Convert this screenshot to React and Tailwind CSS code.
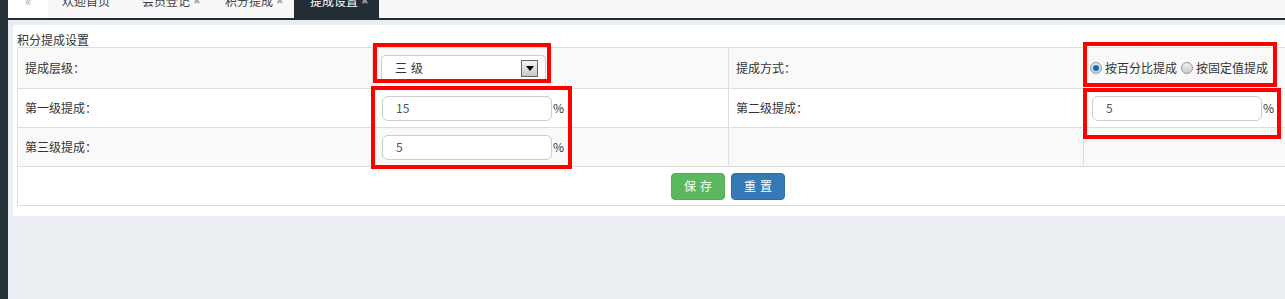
import React from 'react';

const font = { fontFamily: '"Noto Sans CJK SC", "Liberation Sans", sans-serif' };

const Tab = ({ label, close, active }) => (
    <div
        className={`h-[18px] flex items-start ${close ? 'pl-[14px] pr-[10px]' : 'pl-[14px] pr-[18px]'} ${active ? 'bg-[#232d33] text-white pl-[16px]' : 'text-[#444]'}`}
    >
        <span className="-mt-[6px] text-[12px] leading-[13px] whitespace-nowrap">{label}</span>
        {close && (
            <span className={`-mt-[6px] ml-[3px] text-[9px] leading-[13px] ${active ? 'text-[#999]' : 'text-[#aaa]'}`}>✖</span>
        )}
    </div>
);

const PercentInput = ({ value }) => (
    <div className="flex items-center">
        <div className="w-[170px] h-[25px] rounded-[6px] border border-[#ccc] bg-white flex items-center pl-[13px] text-[12px] text-[#555]">
            {value}
        </div>
        <span className="text-[12px] text-[#333] ml-[1px]">%</span>
    </div>
);

const Radio = ({ checked }) => (
    <span className="inline-flex w-[12px] h-[12px] rounded-full border border-[#999] bg-gradient-to-b from-[#eee] to-[#ccc] items-center justify-center">
        {checked && <span className="w-[6px] h-[6px] rounded-full bg-[#0a6fc2]" />}
    </span>
);

export default function App() {
    const modes = [
        { label: '按百分比提成', checked: true },
        { label: '按固定值提成', checked: false }
    ];

    return (
        <div className="relative h-[299px] w-[1285px] overflow-hidden flex bg-[#eaedf1]" style={font}>
            {/* left strip */}
            <div className="w-[8px] shrink-0 bg-[#263238]" />

            <div className="flex-1 flex flex-col min-w-0">
                {/* tab bar */}
                <div className="h-[18px] flex bg-[#f7f7f7] shrink-0">
                    <div className="w-[40px] h-[18px] bg-white flex justify-center">
                        <span className="-mt-[6px] text-[13px] leading-[13px] text-[#aaa]">«</span>
                    </div>
                    <div className="flex">
                        <Tab label="欢迎首页" />
                        <Tab label="会员登记" close />
                        <Tab label="积分提成" close />
                        <Tab label="提成设置" close active />
                    </div>
                </div>
                <div className="h-[2px] bg-[#232d33] shrink-0" />

                {/* panel */}
                <div className="mt-[5px] ml-[5px] w-[1440px] bg-white pb-[10px] pl-[4px]">
                    <div className="h-[22px] pt-[8px] text-[12px] leading-[14px] text-[#333]">积分提成设置</div>
                    <table className="w-[1421px] border-collapse table-fixed text-[12px] text-[#333]">
                        <tbody>
                            <tr className="h-[41px] bg-[#f9f9f9]">
                                <td className="border border-[#ddd] pl-[7px] w-[355px]">提成层级：</td>
                                <td className="border border-[#ddd] pl-[8px] w-[356px]">
                                    <div className="w-[165px] h-[27px] rounded-[4px] border border-[#ccc] bg-white flex items-center justify-between pl-[13px] pr-[7px]">
                                        <span className="tracking-[4px]">三级</span>
                                        <span className="w-[17px] h-[17px] border border-[#666] bg-gradient-to-b from-[#f4f4f4] to-[#c8c8c8] flex items-center justify-center">
                                            <svg width="8" height="5" viewBox="0 0 8 5">
                                                <path d="M0 0 H8 L4 5 Z" fill="#000" />
                                            </svg>
                                        </span>
                                    </div>
                                </td>
                                <td className="border border-[#ddd] pl-[7px] w-[355px]">提成方式：</td>
                                <td className="border border-[#ddd] pl-[6px] w-[355px]">
                                    <div className="flex items-center">
                                        {modes.map((m) => (
                                            <label key={m.label} className="flex items-center mr-[4px]">
                                                <Radio checked={m.checked} />
                                                <span className="ml-[3px]">{m.label}</span>
                                            </label>
                                        ))}
                                    </div>
                                </td>
                            </tr>
                            <tr className="h-[39px] bg-white">
                                <td className="border border-[#ddd] pl-[7px]">第一级提成：</td>
                                <td className="border border-[#ddd] pl-[9px]">
                                    <PercentInput value="15" />
                                </td>
                                <td className="border border-[#ddd] pl-[7px]">第二级提成：</td>
                                <td className="border border-[#ddd] pl-[8px]">
                                    <PercentInput value="5" />
                                </td>
                            </tr>
                            <tr className="h-[39px] bg-[#f9f9f9]">
                                <td className="border border-[#ddd] pl-[7px]">第三级提成：</td>
                                <td className="border border-[#ddd] pl-[9px]">
                                    <PercentInput value="5" />
                                </td>
                                <td className="border border-[#ddd]" />
                                <td className="border border-[#ddd]" />
                            </tr>
                            <tr className="h-[39px] bg-white">
                                <td colSpan={4} className="border border-[#ddd]">
                                    <div className="flex justify-center gap-[6px]">
                                        <button className="w-[54px] h-[27px] rounded-[4px] bg-[#5cb85c] border border-[#4cae4c] text-white text-[12px] tracking-[4px] pl-[4px]">
                                            保存
                                        </button>
                                        <button className="w-[54px] h-[27px] rounded-[4px] bg-[#337ab7] border border-[#2e6da4] text-white text-[12px] tracking-[4px] pl-[4px]">
                                            重置
                                        </button>
                                    </div>
                                </td>
                            </tr>
                        </tbody>
                    </table>
                </div>
            </div>

            {/* red annotation boxes */}
            <div className="absolute left-[373px] top-[43px] w-[178px] h-[40px] border-4 border-[#ff0000]" />
            <div className="absolute left-[371px] top-[86px] w-[201px] h-[83px] border-4 border-[#ff0000]" />
            <div className="absolute left-[1083px] top-[42px] w-[194px] h-[45px] border-4 border-[#ff0000]" />
            <div className="absolute left-[1083px] top-[88px] w-[198px] h-[51px] border-4 border-[#ff0000]" />
        </div>
    );
}
